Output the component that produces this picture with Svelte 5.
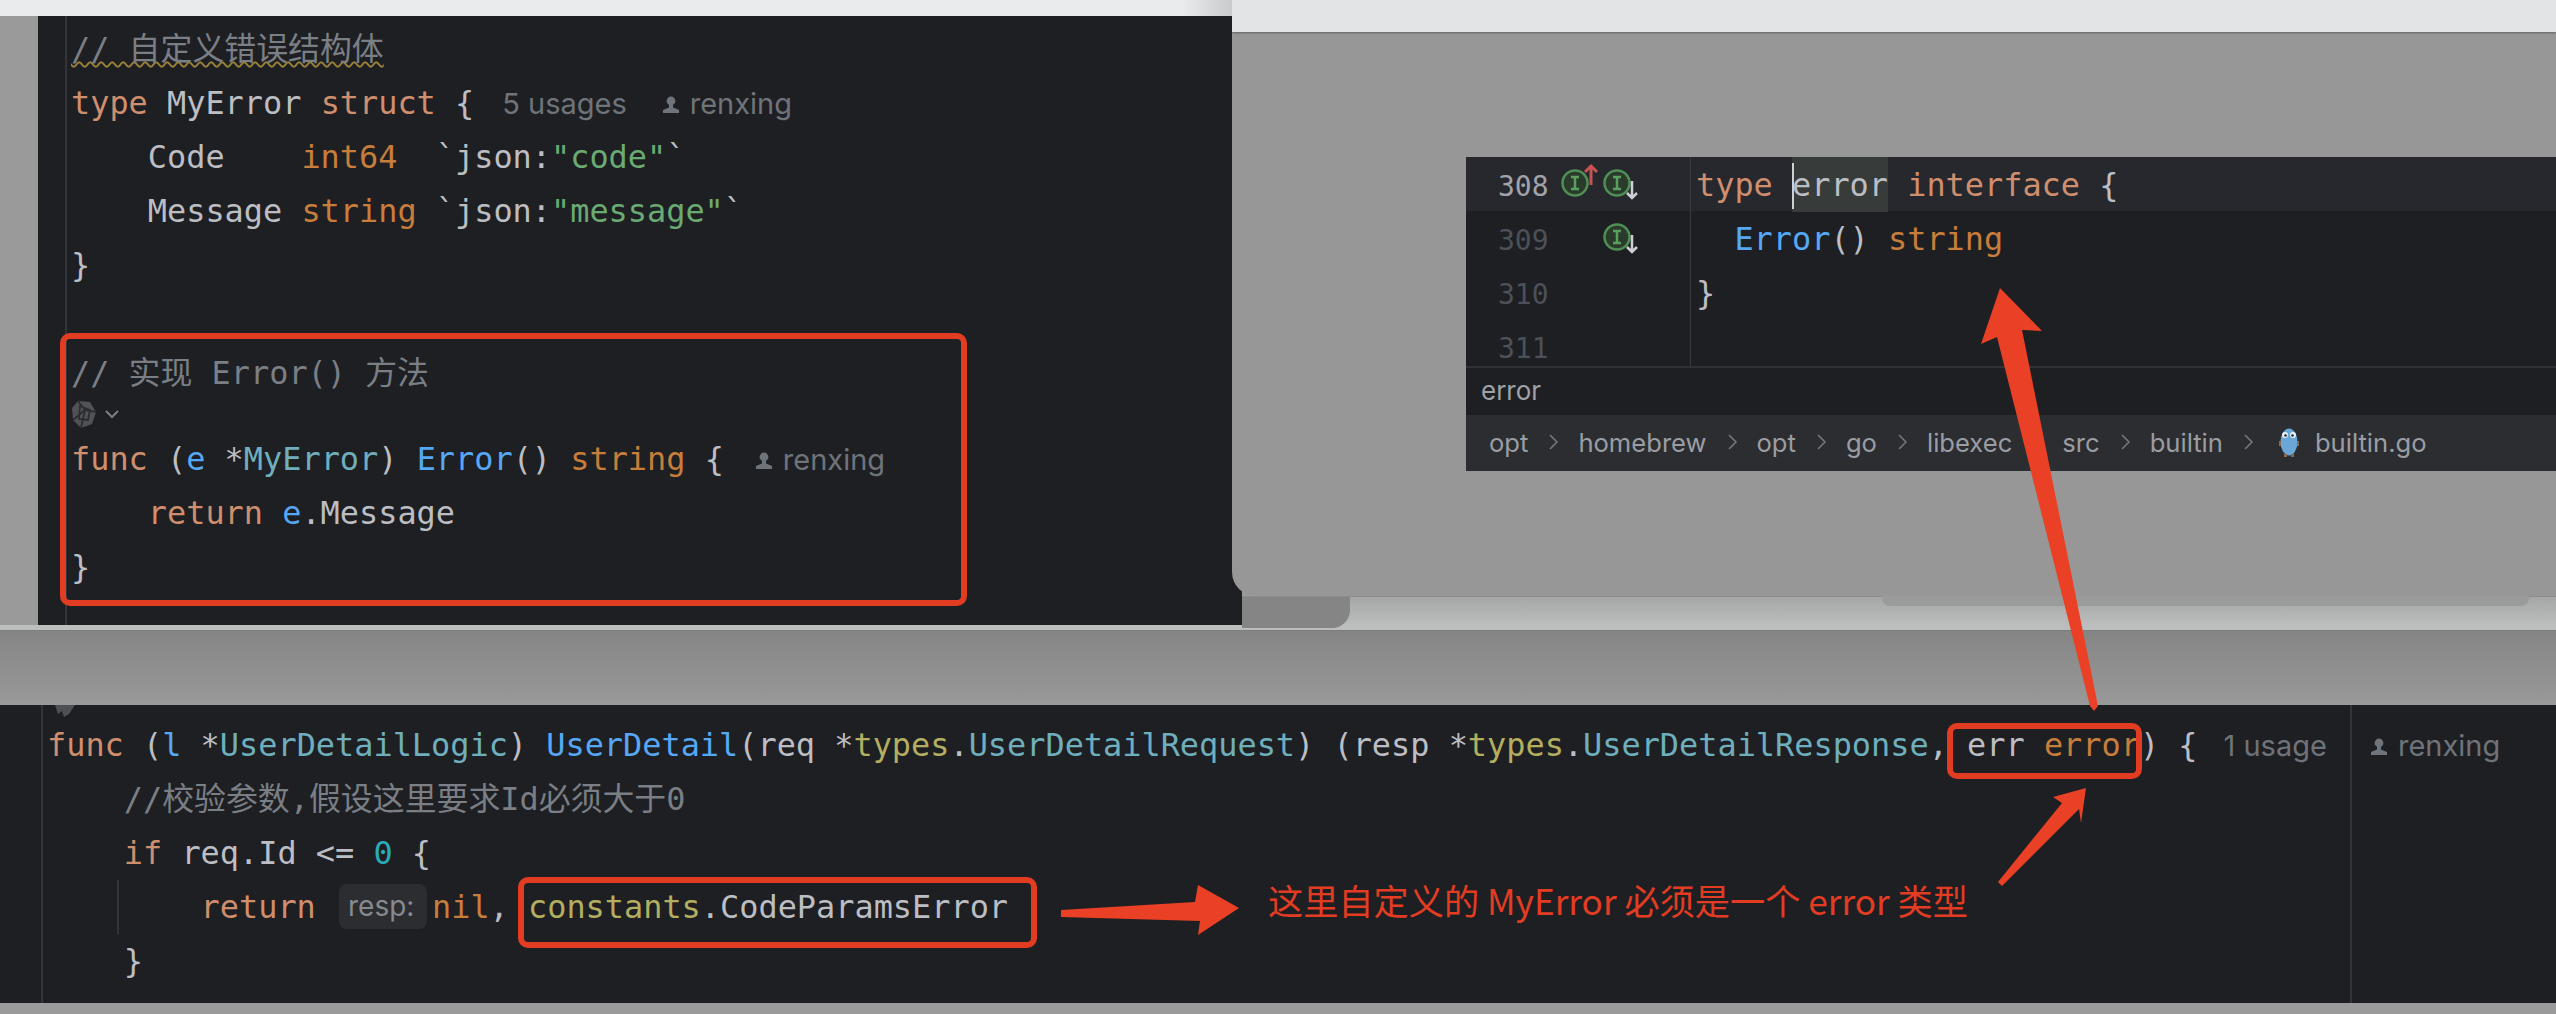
<script>
	const crumbs = ['opt', 'homebrew', 'opt', 'go', 'libexec', 'src', 'builtin'];
</script>

{#snippet person()}
	<svg class="person" viewBox="0 0 20 20" aria-hidden="true">
		<circle cx="10" cy="6" r="4.4" fill="currentColor" />
		<path d="M8 9h4v3.5l6 2.5v3H2v-3l6-2.5z" fill="currentColor" />
	</svg>
{/snippet}

<div class="stage">
	<div class="top-left"></div>
	<div class="low-band"></div>
	<div class="low-tab"></div>
	<div class="low-tab-right"></div>
	<div class="low-fade"></div>

	<!-- upper left editor -->
	<div class="editor left-editor">
		<div class="code">
			<div class="line"><span class="cm wavy">// 自定义错误结构体</span></div>
			<div class="line"><span class="kw">type</span> MyError <span class="kw">struct</span> &#123;<span class="inlay first">5 usages</span><span class="inlay author">{@render person()}renxing</span></div>
			<div class="line in4">{'Code    '}<span class="ty">{'int64  '}</span>`json:<span class="str">"code"</span>`</div>
			<div class="line in4">{'Message '}<span class="ty">{'string '}</span>`json:<span class="str">"message"</span>`</div>
			<div class="line">&#125;</div>
			<div class="line"></div>
			<div class="line"><span class="cm">// 实现 Error() 方法</span></div>
			<div class="icon-line">
				<svg class="swirl" width="52" height="32" viewBox="0 0 52 32" aria-hidden="true">
					<path d="M7 1l12 1 6 10-4 12-11 4-8-8-1-12z" fill="#505256" />
					<path d="M7 1l7 9 11 2M14 10l-4 18M14 10L2 20M9 6l10 4-2 10-9-1z" fill="none" stroke="#2c2d30" stroke-width="1.8" />
					<path d="M35 11l6 6 6-6" fill="none" stroke="#7a7e85" stroke-width="2" />
				</svg>
			</div>
			<div class="line"><span class="kw">func</span> (<span class="fn">e</span> *<span class="tp">MyError</span>) <span class="fn">Error</span>() <span class="ty">string</span> &#123;<span class="inlay second">{@render person()}renxing</span></div>
			<div class="line in4"><span class="kw">return</span> <span class="fn">e</span>.Message</div>
			<div class="line">&#125;</div>
		</div>
	</div>

	<!-- builtin.go window behind the popup -->
	<div class="window">
		<div class="window-bar"></div>
		<div class="popup">
			<div class="pop-lines">
				<div class="pop-row current">
					<div class="pop-gutter">
						<span class="num">308</span>
						<svg class="marks" width="80" height="54" viewBox="0 0 80 54" aria-hidden="true">
							<circle class="mark" cx="15" cy="26" r="12.5" />
							<path class="mark-i" d="M11 20h8M15 20v12M11 32h8" />
							<path d="M31 28V9M25 15l6-6 6 6" fill="none" stroke="#c75450" stroke-width="3" />
							<circle class="mark" cx="57" cy="26" r="12.5" />
							<path class="mark-i" d="M53 20h8M57 20v12M53 32h8" />
							<path d="M72 24v17M67 36l5 5 5-5" fill="none" stroke="#ced0d6" stroke-width="2.5" />
						</svg>
					</div>
					<div class="pop-code"><span class="kw">type</span> <span class="caret-word">error</span> <span class="kw">interface</span> &#123;</div>
				</div>
				<div class="pop-row">
					<div class="pop-gutter">
						<span class="num">309</span>
						<svg class="marks" width="80" height="54" viewBox="0 0 80 54" aria-hidden="true">
							<circle class="mark" cx="57" cy="26" r="12.5" />
							<path class="mark-i" d="M53 20h8M57 20v12M53 32h8" />
							<path d="M72 24v17M67 36l5 5 5-5" fill="none" stroke="#ced0d6" stroke-width="2.5" />
						</svg>
					</div>
					<div class="pop-code in2"><span class="fn">Error</span>() <span class="ty">string</span></div>
				</div>
				<div class="pop-row">
					<div class="pop-gutter"><span class="num">310</span></div>
					<div class="pop-code">&#125;</div>
				</div>
				<div class="pop-row">
					<div class="pop-gutter"><span class="num">311</span></div>
					<div class="pop-code"></div>
				</div>
			</div>
			<div class="pop-title">error</div>
			<div class="crumbs">
				{#each crumbs as crumb}
					<span>{crumb}</span>
					<svg class="chev" width="12" height="24" viewBox="0 0 12 24" aria-hidden="true">
						<path d="M3 5l7 7-7 7" fill="none" stroke="#74777e" stroke-width="1.6" />
					</svg>
				{/each}
				<svg class="gopher" width="20" height="30" viewBox="0 0 20 30" aria-hidden="true">
					<ellipse cx="10" cy="15" rx="8.5" ry="13.5" fill="#6aa7d6" />
					<circle cx="6" cy="8" r="3" fill="#e8f1f8" />
					<circle cx="14" cy="8" r="3" fill="#e8f1f8" />
					<circle cx="6.5" cy="8.5" r="1.3" fill="#1e2a33" />
					<circle cx="13.5" cy="8.5" r="1.3" fill="#1e2a33" />
					<rect x="0" y="14" width="2" height="5" fill="#8a6a50" />
					<rect x="18" y="14" width="2" height="5" fill="#8a6a50" />
					<rect x="5" y="27" width="3" height="3" fill="#8a6a50" />
					<rect x="12" y="27" width="3" height="3" fill="#8a6a50" />
				</svg>
				<span>builtin.go</span>
			</div>
		</div>
	</div>

	<!-- lower editor -->
	<div class="editor bottom-editor">
		<div class="bottom-main">
			<div class="code">
				<svg class="clipped" width="26" height="12" viewBox="0 0 26 12" aria-hidden="true">
					<path d="M3 0h20l-6 9-5 3-2-6-4 3z" fill="#4e5054" />
				</svg>
				<div class="line"><span class="kw">func</span> (<span class="fn">l</span> *<span class="tp">UserDetailLogic</span>) <span class="fn">UserDetail</span>(req *<span class="pkg">types</span>.<span class="tp">UserDetailRequest</span>) (resp *<span class="pkg">types</span>.<span class="tp">UserDetailResponse</span>, err <span class="ty">error</span>) &#123;<span class="inlay usage">1 usage</span></div>
				<div class="line in4"><span class="cm">//校验参数,假设这里要求Id必须大于0</span></div>
				<div class="line in4"><span class="kw">if</span> req.Id &lt;= <span class="nr">0</span> &#123;</div>
				<div class="line in8 guided"><span class="kw">return</span> <span class="hint">resp:</span><span class="ty">nil</span>, <span class="pkg">constants</span>.CodeParamsError</div>
				<div class="line in4">&#125;</div>
			</div>
		</div>
		<div class="blame"><span class="inlay">{@render person()}renxing</span></div>
	</div>

	<!-- annotations drawn over the screenshots -->
	<div class="mark-box box-a"></div>
	<div class="mark-box box-b"></div>
	<div class="mark-box box-c"></div>
	<div class="note">这里自定义的 MyError 必须是一个 error 类型</div>
	<svg class="arrows" width="2556" height="1014" viewBox="0 0 2556 1014" aria-hidden="true">
		<polygon points="2000,288 2042,331 2022,330 2098,706 2094,711 2090,706 1997,337 1981,344" />
		<polygon points="2086,788 2081,823 2079,809 2002,886 1998,882 2062,803 2053,797" />
		<polygon points="1061,910 1195,902 1198,885 1239,908 1198,935 1200,921 1061,917" />
	</svg>
</div>

<style>
	:global(body) {
		margin: 0;
	}

	.stage {
		position: relative;
		width: 2556px;
		height: 1014px;
		overflow: hidden;
		background: #9a9a9a;
		font-family: "DejaVu Sans Mono", "Noto Sans CJK SC", monospace;
		font-size: 31.9px;
		color: #bcbec4;
	}

	.top-left {
		position: absolute;
		left: 0;
		top: 0;
		width: 1232px;
		height: 16px;
		background: linear-gradient(to right, #eaebed 96%, #c9cacb);
	}

	.low-band {
		position: absolute;
		left: 0;
		top: 625px;
		width: 2556px;
		height: 5px;
		background: #bcbdbd;
	}

	.low-tab {
		position: absolute;
		left: 1242px;
		top: 596px;
		width: 1314px;
		height: 29px;
		background: linear-gradient(to bottom, #a5a6a6, #bcbdbd);
		border-top: 1px solid #8c8c8c;
		box-sizing: border-box;
	}

	.low-tab::before {
		content: "";
		position: absolute;
		left: 0;
		top: 0;
		width: 108px;
		height: 31px;
		background: #858585;
		border-bottom-right-radius: 18px;
	}

	.low-tab-right {
		position: absolute;
		left: 1882px;
		top: 596px;
		width: 647px;
		height: 10px;
		background: #9a9b9b;
		border-radius: 0 0 8px 8px;
	}

	.low-fade {
		position: absolute;
		left: 0;
		top: 630px;
		width: 2556px;
		height: 75px;
		background: linear-gradient(to bottom, #858585, #999999);
		border-top: 1px solid #7c7c7c;
		box-sizing: border-box;
	}

	.editor {
		background: #1e1f22;
		line-height: 54px;
	}

	.left-editor {
		position: absolute;
		left: 38px;
		top: 16px;
		width: 1204px;
		height: 609px;
		padding-left: 27px;
		box-sizing: border-box;
	}

	.code {
		height: 100%;
		box-sizing: border-box;
		border-left: 2px solid #33353a;
		padding-left: 4px;
	}

	.left-editor .code {
		padding-top: 6px;
	}

	.line {
		height: 54px;
		white-space: pre;
	}

	.in2 {
		padding-left: 2ch;
	}

	.in4 {
		padding-left: 4ch;
	}

	.in8 {
		padding-left: 8ch;
	}

	.icon-line {
		height: 32px;
	}

	.swirl {
		display: block;
	}

	.cm {
		color: #7a7e85;
	}

	.wavy {
		text-decoration: underline wavy #9a8239;
		text-decoration-thickness: 2px;
		text-underline-offset: 1px;
	}

	.kw {
		color: #cf8e6d;
	}

	.ty {
		color: #c77d3b;
	}

	.str {
		color: #6aab73;
	}

	.fn {
		color: #56a8f5;
	}

	.tp {
		color: #6fafbd;
	}

	.pkg {
		color: #b3ae60;
	}

	.nr {
		color: #2aacb8;
	}

	.inlay {
		font-family: Inter, "Noto Sans", sans-serif;
		font-size: 29px;
		color: #6f737a;
	}

	.inlay.first {
		margin-left: 28px;
	}

	.inlay.author {
		margin-left: 34px;
	}

	.inlay.second {
		margin-left: 30px;
	}

	.inlay.usage {
		margin-left: 26px;
	}

	.person {
		width: 20px;
		height: 20px;
		margin-right: 9px;
		vertical-align: -1px;
	}

	.window {
		position: absolute;
		left: 1232px;
		top: 0;
		width: 1324px;
		height: 596px;
		background: #979797;
		border-bottom-left-radius: 24px;
		overflow: hidden;
	}

	.window-bar {
		height: 32px;
		background: #e3e4e6;
		box-shadow: 0 1px 2px rgba(0, 0, 0, 0.35);
	}

	.popup {
		position: absolute;
		left: 234px;
		top: 157px;
		right: 0;
		height: 314px;
		background: #1e1f22;
	}

	.pop-lines {
		height: 209px;
		overflow: hidden;
		border-bottom: 2px solid #2f3136;
	}

	.pop-row {
		display: flex;
		height: 54px;
		line-height: 54px;
	}

	.pop-row.current {
		background: #26282e;
	}

	.pop-gutter {
		position: relative;
		width: 225px;
		flex: none;
		box-sizing: border-box;
		padding: 1px 0 0 32px;
		border-right: 1px solid #393b40;
	}

	.num {
		font-size: 28px;
		color: #4b5059;
	}

	.current .num {
		color: #a1a3ab;
	}

	.marks {
		position: absolute;
		left: 94px;
		top: 0;
	}

	.mark {
		fill: #2a3b2b;
		stroke: #4f8f56;
		stroke-width: 2.5;
	}

	.mark-i {
		fill: none;
		stroke: #5aa15f;
		stroke-width: 2.5;
	}

	.pop-code {
		margin-left: 5px;
		padding-top: 1px;
		white-space: pre;
	}

	.caret-word {
		position: relative;
		display: inline-block;
		background: #373b39;
		box-shadow: 0 -1px 0 #373b39;
	}

	.caret-word::before {
		content: "";
		position: absolute;
		left: 0;
		top: 5px;
		bottom: 3px;
		width: 2px;
		background: #ced0d6;
	}

	.pop-title {
		height: 47px;
		line-height: 45px;
		padding-left: 15px;
		font-family: Inter, "Noto Sans", sans-serif;
		font-size: 26px;
		color: #a0a2a8;
	}

	.crumbs {
		display: flex;
		align-items: center;
		gap: 19px;
		height: 54px;
		padding: 0 0 2px 23px;
		background: #2b2d30;
		font-family: Inter, "Noto Sans", sans-serif;
		font-size: 25.6px;
		color: #9a9da3;
	}

	.gopher {
		margin: 0 -3px 0 6px;
	}

	.bottom-editor {
		position: absolute;
		left: 0;
		top: 705px;
		width: 2556px;
		height: 298px;
		display: grid;
		grid-template-columns: 2350px 1fr;
	}

	.bottom-main {
		padding-left: 41px;
	}

	.bottom-main .code {
		position: relative;
		padding-top: 13px;
	}

	.clipped {
		position: absolute;
		left: 9px;
		top: 0;
	}

	.guided {
		position: relative;
	}

	.guided::before {
		content: "";
		position: absolute;
		left: 70px;
		top: 0;
		height: 54px;
		border-left: 2px solid #33353a;
	}

	.hint {
		display: inline-block;
		width: 88px;
		height: 45px;
		margin: 0 5px 0 4px;
		box-sizing: border-box;
		padding-left: 9px;
		line-height: 44px;
		vertical-align: 2px;
		border-radius: 8px;
		background: #2b2d30;
		font-family: Inter, "Noto Sans", sans-serif;
		font-size: 28px;
		color: #868a91;
	}

	.blame {
		border-left: 2px solid #33353a;
		padding: 13px 0 0 17px;
	}

	.mark-box {
		position: absolute;
		box-sizing: border-box;
		border: 6px solid #e23c23;
		border-radius: 10px;
	}

	.box-a {
		left: 60px;
		top: 333px;
		width: 907px;
		height: 273px;
	}

	.box-b {
		left: 518px;
		top: 877px;
		width: 519px;
		height: 71px;
	}

	.box-c {
		left: 1947px;
		top: 723px;
		width: 195px;
		height: 56px;
	}

	.note {
		position: absolute;
		left: 1268px;
		top: 876px;
		font-family: "Noto Sans CJK SC", sans-serif;
		font-size: 35.2px;
		line-height: 48px;
		color: #e23c23;
		white-space: pre;
	}

	.arrows {
		position: absolute;
		left: 0;
		top: 0;
		fill: #ea4025;
	}
</style>
